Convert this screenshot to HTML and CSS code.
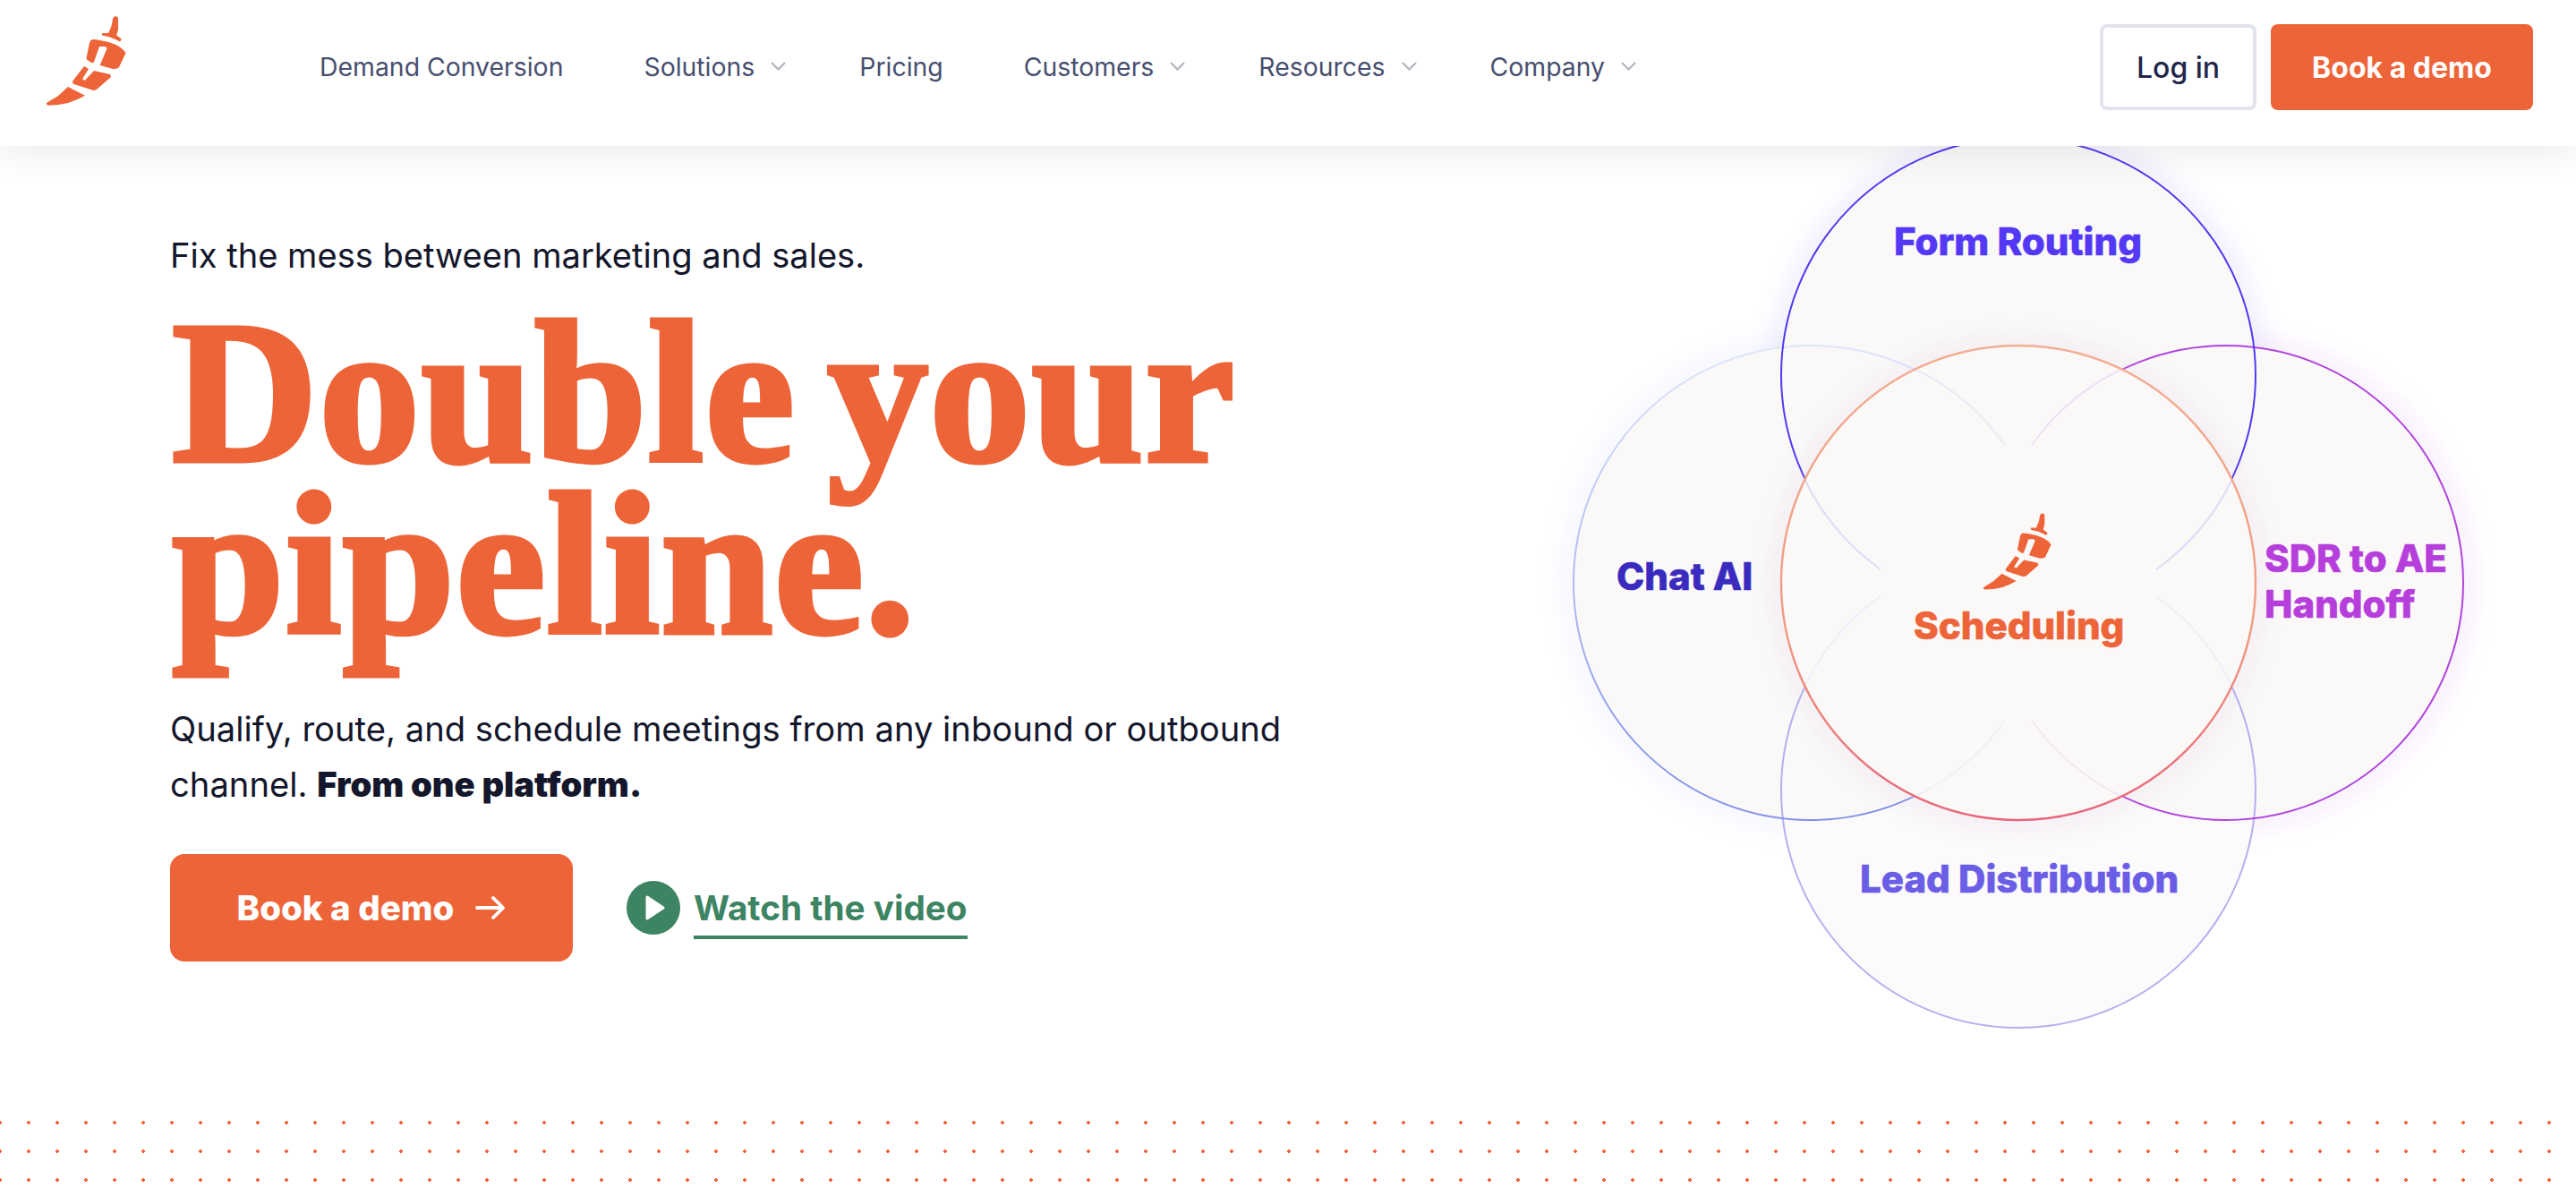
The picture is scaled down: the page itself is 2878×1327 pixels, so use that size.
FILE: index.html
```html
<!DOCTYPE html>
<html lang="en">
<head>
    <meta charset="UTF-8">
    <meta name="viewport" content="width=device-width, initial-scale=1.0">
    <title>Double your pipeline</title>
    <link rel="stylesheet" href="styles.css">
</head>
<body>
    <svg class="defs" width="0" height="0" aria-hidden="true">
        <defs>
            <symbol id="chili" viewBox="52 18 89 100">
                <path d="M128.6 18.3 Q132 18 132 21 L132 33 Q131 37 130 39 L136 44 L134 46.5 Q124 41 114 39.5 L114 37 L121 37 Q125 30 126 21 Q126.5 18.5 128.6 18.3Z"/>
                <path d="M103.5 44 Q108 44 111.6 45 Q122 46.5 129.5 50 Q136 53 140.6 59 L133 75 Q131.5 77 126 77 L111.6 73 L119.6 54 Q119 52 117 52 L111 52 L105 69 Q104 71 102 70 L96.4 66 Q98 57 100 48 Q101 44.5 103.5 44Z"/>
                <path d="M94 74 L99 77 L92 88 L94.6 90 L105 79 L123 83 L124 86 L109 99 Q106 101.5 103.6 100.7 L82.6 94 Q80.5 92.5 81 90.7Z"/>
                <path d="M76 97 L95 106.7 Q86 112 76 115 Q65 117.5 54.5 117.7 Q51 117 52 115 Q60 110 65 107Z"/>
            </symbol>
            <symbol id="chevron" viewBox="0 0 17 10">
                <path d="M1 1 L8.5 8.5 L16 1" fill="none" stroke="currentColor" stroke-width="2.4"/>
            </symbol>
        </defs>
    </svg>

    <header class="site-header">
        <a class="logo" href="#"><svg width="89" height="100"><use href="#chili"/></svg></a>
        <nav class="main-nav">
            <a class="plain" href="#">Demand Conversion</a>
            <a href="#">Solutions <svg class="chev"><use href="#chevron"/></svg></a>
            <a class="plain" href="#">Pricing</a>
            <a href="#">Customers <svg class="chev"><use href="#chevron"/></svg></a>
            <a href="#">Resources <svg class="chev"><use href="#chevron"/></svg></a>
            <a href="#">Company <svg class="chev"><use href="#chevron"/></svg></a>
        </nav>
        <div class="header-actions">
            <a class="btn-login" href="#">Log in</a>
            <a class="btn-demo" href="#">Book a demo</a>
        </div>
    </header>

    <main class="hero">
        <section class="hero-copy">
            <p class="eyebrow">Fix the mess between marketing and sales.</p>
            <h1>Double your pipeline.</h1>
            <p class="lead">Qualify, route, and schedule meetings from any inbound or outbound channel. <strong>From one platform.</strong></p>
            <div class="cta-row">
                <a class="btn-hero" href="#">Book a demo
                    <svg width="34" height="28" viewBox="0 0 34 28"><path d="M2 14 H30 M20 3 L31 14 L20 25" fill="none" stroke="#fff" stroke-width="3.8" stroke-linecap="round" stroke-linejoin="round"/></svg>
                </a>
                <a class="btn-video" href="#">
                    <svg width="60" height="60" viewBox="0 0 60 60"><circle cx="30" cy="30" r="30" fill="#3d8463"/><path d="M23 18 L41 30 L23 42Z" fill="#fff" stroke="#fff" stroke-width="3" stroke-linejoin="round"/></svg>
                    <span>Watch the video</span>
                </a>
            </div>
        </section>

        <section class="venn">
            <svg class="venn-art" width="996" height="996" viewBox="0 0 996 996">
                <defs>
                    <linearGradient id="ringLeft" x1="0" y1="0" x2="0" y2="1">
                        <stop offset="0" stop-color="#dfe6fb"/>
                        <stop offset="1" stop-color="#7f8fe8"/>
                    </linearGradient>
                    <linearGradient id="ringCenter" x1="0" y1="0" x2="0" y2="1">
                        <stop offset="0" stop-color="#f4ad92"/>
                        <stop offset="0.6" stop-color="#f09a80"/>
                        <stop offset="1" stop-color="#e9647a"/>
                    </linearGradient>
                    <filter id="soft" x="-20%" y="-20%" width="140%" height="140%">
                        <feGaussianBlur stdDeviation="14"/>
                    </filter>
                </defs>

                <!-- glows behind the discs -->
                <circle cx="266" cy="498" r="266" fill="none" stroke="#c4c8fa" stroke-width="8" opacity=".5" filter="url(#soft)"/>
                <circle cx="498" cy="266" r="266" fill="none" stroke="#8f85fb" stroke-width="8" opacity=".4" filter="url(#soft)"/>
                <circle cx="730" cy="498" r="266" fill="none" stroke="#d79af2" stroke-width="8" opacity=".5" filter="url(#soft)"/>

                <!-- discs -->
                <circle cx="498" cy="730" r="265" fill="#fcfafa"/>
                <circle cx="266" cy="498" r="265" fill="#fbf9f8"/>
                <circle cx="730" cy="498" r="265" fill="#fbf9f8"/>
                <circle cx="498" cy="266" r="265" fill="#fbf9f8"/>

                <!-- rings -->
                <circle cx="498" cy="730" r="265" fill="none" stroke="#b5aff0" stroke-width="2"/>
                <circle cx="266" cy="498" r="265" fill="none" stroke="url(#ringLeft)" stroke-width="2"/>
                <circle cx="730" cy="498" r="265" fill="none" stroke="#b044dd" stroke-width="2"/>
                <circle cx="498" cy="266" r="265" fill="none" stroke="#4f3bf2" stroke-width="2"/>

                <!-- center disc, only short ends of the other rings show through -->
                <circle cx="498" cy="498" r="266" fill="none" stroke="#b9a6d8" stroke-width="8" opacity=".4" filter="url(#soft)"/>
                <circle cx="498" cy="498" r="265" fill="#fbf9f8"/>
                <g fill="none" stroke-width="2">
                    <path d="M259 382 A266 266 0 0 0 344 483" stroke="#dcdcf6"/>
                    <path d="M737 382 A266 266 0 0 1 652 483" stroke="#dcdcf6"/>
                    <path d="M259 614 A266 266 0 0 1 344 513" stroke="#eeeef9"/>
                    <path d="M737 614 A266 266 0 0 0 652 513" stroke="#eeeef9"/>
                    <path d="M382 259 A266 266 0 0 1 483 344" stroke="#ece9f6"/>
                    <path d="M614 259 A266 266 0 0 0 513 344" stroke="#eee0f6"/>
                    <path d="M382 737 A266 266 0 0 0 483 652" stroke="#f1eff7"/>
                    <path d="M614 737 A266 266 0 0 1 513 652" stroke="#f1e6f5"/>
                </g>
                <circle cx="498" cy="498" r="265" fill="none" stroke="url(#ringCenter)" stroke-width="2.4"/>
            </svg>
            <svg class="venn-logo" width="76" height="86"><use href="#chili"/></svg>
            <span class="venn-label label-form">Form Routing</span>
            <span class="venn-label label-chat">Chat AI</span>
            <span class="venn-label label-sdr">SDR to AE<br>Handoff</span>
            <span class="venn-label label-sched">Scheduling</span>
            <span class="venn-label label-lead">Lead Distribution</span>
        </section>
    </main>

    <div class="dots"></div>
</body>
</html>
```

FILE: styles.css
```css
* {
    margin: 0;
    padding: 0;
    box-sizing: border-box;
}

html, body {
    height: 100%;
    overflow: hidden;
}

body {
    display: flex;
    flex-direction: column;
    font-family: Inter, "Liberation Sans", sans-serif;
    background-color: #fff;
    color: #14172b;
}

a {
    text-decoration: none;
}

.defs {
    position: absolute;
}

.site-header {
    position: relative;
    z-index: 5;
    display: flex;
    align-items: center;
    flex: 0 0 163px;
    height: 163px;
    padding: 0 48px 13px 52px;
    background-color: #fff;
    box-shadow: 0 8px 40px rgba(0,0,0,0.08);
}

.logo {
    display: flex;
    margin-top: -14px;
    fill: #ed6438;
}

.main-nav {
    display: flex;
    align-items: center;
    gap: 82px;
    margin-top: -2px;
    margin-left: 216px;
    flex: 1;
}

.main-nav a {
    display: flex;
    align-items: center;
    gap: 18px;
    font-size: 28.4px;
    color: #474f6f;
}

.main-nav a.plain {
    margin-right: 8px;
}

.chev {
    width: 17px;
    height: 10px;
    color: #b5b8bf;
}

.header-actions {
    display: flex;
    gap: 16px;
}

.btn-login,
.btn-demo {
    display: flex;
    align-items: center;
    justify-content: center;
    height: 96px;
    border-radius: 8px;
    font-size: 32px;
}

.btn-login {
    width: 175px;
    border: 4px solid #e1e4ed;
    color: #22274a;
    font-weight: 500;
}

.btn-demo {
    width: 293px;
    background-color: #ed6438;
    color: #fff;
    font-weight: 700;
}

.hero {
    display: flex;
    justify-content: space-between;
    flex: 1;
    padding: 0 125px 0 190px;
}

.hero-copy {
    padding-top: 96px;
}

.eyebrow {
    font-size: 38.1px;
    line-height: 52px;
}

h1 {
    width: 1240px;
    margin-top: 32px;
    padding-left: 2px;
    font-family: "Liberation Serif", serif;
    font-size: 226px;
    font-weight: 700;
    line-height: 192px;
    letter-spacing: 1px;
    word-spacing: -22px;
    color: #ed6438;
    -webkit-text-stroke: 5px #ed6438;
}

.lead {
    width: 1280px;
    margin-top: 56px;
    font-size: 38.2px;
    line-height: 62px;
}

.lead strong {
    font-weight: 900;
}

.cta-row {
    display: flex;
    align-items: center;
    gap: 60px;
    margin-top: 47px;
}

.btn-hero {
    display: flex;
    align-items: center;
    justify-content: center;
    gap: 24px;
    width: 450px;
    height: 120px;
    border-radius: 16px;
    background-color: #ed6438;
    color: #fff;
    font-size: 38.5px;
    font-weight: 800;
}

.btn-video {
    display: flex;
    align-items: center;
    gap: 15px;
    color: #3d8463;
    font-size: 38.7px;
    font-weight: 700;
}

.btn-video span {
    padding: 12px 0 8px;
    border-bottom: 4px solid #3d8463;
}

.venn {
    position: relative;
    flex: 0 0 996px;
    width: 996px;
    height: 996px;
    margin-top: -10px;
}

.venn-art {
    position: absolute;
    left: 0;
    top: 0;
    overflow: visible;
}

.venn-logo {
    position: absolute;
    left: 459px;
    top: 420px;
    fill: #ed6438;
}

.venn-label {
    position: absolute;
    font-size: 42px;
    font-weight: 800;
    line-height: 51px;
    white-space: nowrap;
    -webkit-text-stroke: 0.6px currentColor;
}

.label-form {
    left: 359px;
    top: 91px;
    color: #5338f5;
}

.label-chat {
    left: 49px;
    top: 465px;
    color: #3a2bbf;
}

.label-sdr {
    left: 773px;
    top: 445px;
    color: #b63fdc;
}

.label-sched {
    left: 381px;
    top: 520px;
    color: #ed6438;
}

.label-lead {
    left: 321px;
    top: 803px;
    color: #6a5de6;
}

.dots {
    flex: 0 0 89px;
    background-image: radial-gradient(circle, #f4623a 1.6px, transparent 2px);
    background-size: 32px 32px;
    background-position: -16px 0;
}
```
